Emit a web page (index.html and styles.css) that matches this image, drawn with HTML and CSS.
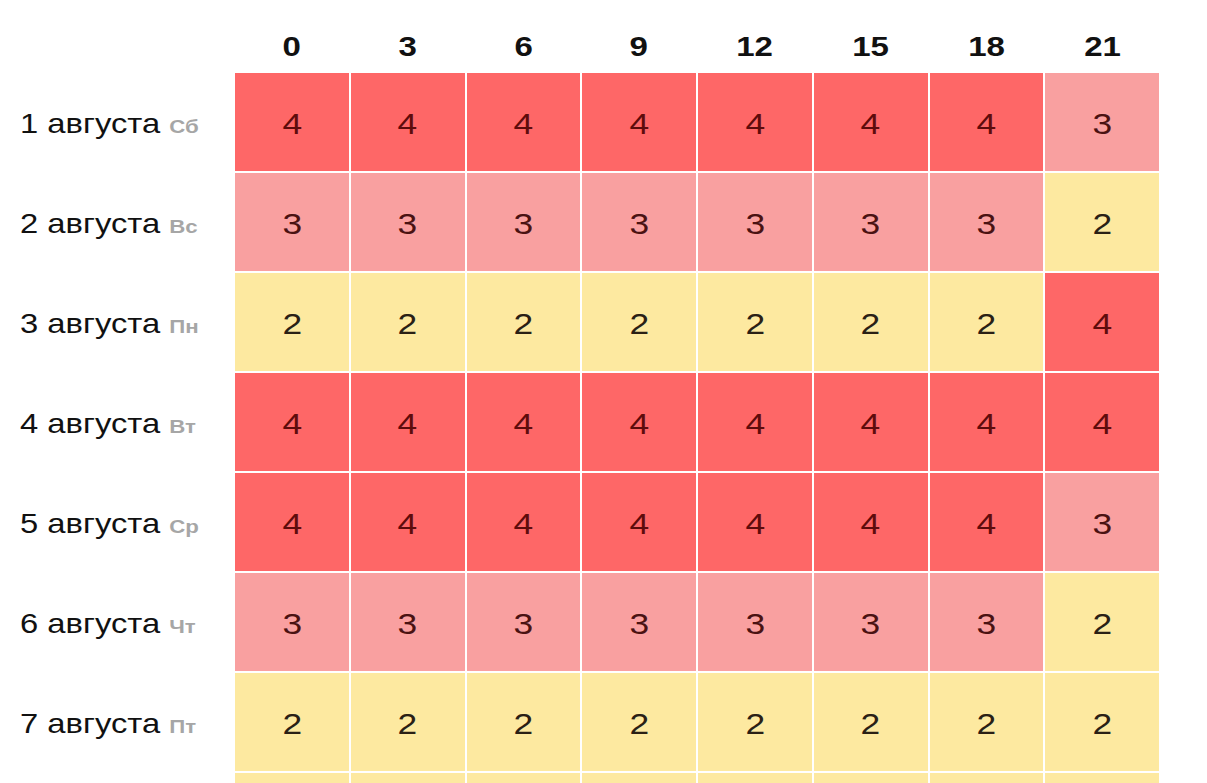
FILE: index.html
```html
<!DOCTYPE html>
<html lang="ru">
<head>
<meta charset="utf-8">
<link rel="stylesheet" href="styles.css">
</head>
<body>
<div class="page">
  <div class="title"><span class="title-text">Магнитные бури, Кр-индекс</span></div>
  <div class="table">
    <div class="corner"></div>
    <div class="hour"><span class="num">0</span></div><div class="hour"><span class="num">3</span></div><div class="hour"><span class="num">6</span></div><div class="hour"><span class="num">9</span></div><div class="hour"><span class="num">12</span></div><div class="hour"><span class="num">15</span></div><div class="hour"><span class="num">18</span></div><div class="hour"><span class="num">21</span></div>

    <div class="day"><span class="lbl">1 августа <span class="wd">Сб</span></span></div>
    <div class="c k4"><span class="num">4</span></div><div class="c k4"><span class="num">4</span></div><div class="c k4"><span class="num">4</span></div><div class="c k4"><span class="num">4</span></div><div class="c k4"><span class="num">4</span></div><div class="c k4"><span class="num">4</span></div><div class="c k4"><span class="num">4</span></div><div class="c k3"><span class="num">3</span></div>

    <div class="day"><span class="lbl">2 августа <span class="wd">Вс</span></span></div>
    <div class="c k3"><span class="num">3</span></div><div class="c k3"><span class="num">3</span></div><div class="c k3"><span class="num">3</span></div><div class="c k3"><span class="num">3</span></div><div class="c k3"><span class="num">3</span></div><div class="c k3"><span class="num">3</span></div><div class="c k3"><span class="num">3</span></div><div class="c k2"><span class="num">2</span></div>

    <div class="day"><span class="lbl">3 августа <span class="wd">Пн</span></span></div>
    <div class="c k2"><span class="num">2</span></div><div class="c k2"><span class="num">2</span></div><div class="c k2"><span class="num">2</span></div><div class="c k2"><span class="num">2</span></div><div class="c k2"><span class="num">2</span></div><div class="c k2"><span class="num">2</span></div><div class="c k2"><span class="num">2</span></div><div class="c k4"><span class="num">4</span></div>

    <div class="day"><span class="lbl">4 августа <span class="wd">Вт</span></span></div>
    <div class="c k4"><span class="num">4</span></div><div class="c k4"><span class="num">4</span></div><div class="c k4"><span class="num">4</span></div><div class="c k4"><span class="num">4</span></div><div class="c k4"><span class="num">4</span></div><div class="c k4"><span class="num">4</span></div><div class="c k4"><span class="num">4</span></div><div class="c k4"><span class="num">4</span></div>

    <div class="day"><span class="lbl">5 августа <span class="wd">Ср</span></span></div>
    <div class="c k4"><span class="num">4</span></div><div class="c k4"><span class="num">4</span></div><div class="c k4"><span class="num">4</span></div><div class="c k4"><span class="num">4</span></div><div class="c k4"><span class="num">4</span></div><div class="c k4"><span class="num">4</span></div><div class="c k4"><span class="num">4</span></div><div class="c k3"><span class="num">3</span></div>

    <div class="day"><span class="lbl">6 августа <span class="wd">Чт</span></span></div>
    <div class="c k3"><span class="num">3</span></div><div class="c k3"><span class="num">3</span></div><div class="c k3"><span class="num">3</span></div><div class="c k3"><span class="num">3</span></div><div class="c k3"><span class="num">3</span></div><div class="c k3"><span class="num">3</span></div><div class="c k3"><span class="num">3</span></div><div class="c k2"><span class="num">2</span></div>

    <div class="day"><span class="lbl">7 августа <span class="wd">Пт</span></span></div>
    <div class="c k2"><span class="num">2</span></div><div class="c k2"><span class="num">2</span></div><div class="c k2"><span class="num">2</span></div><div class="c k2"><span class="num">2</span></div><div class="c k2"><span class="num">2</span></div><div class="c k2"><span class="num">2</span></div><div class="c k2"><span class="num">2</span></div><div class="c k2"><span class="num">2</span></div>

    <div class="day"></div>
    <div class="c k2"></div><div class="c k2"></div><div class="c k2"></div><div class="c k2"></div><div class="c k2"></div><div class="c k2"></div><div class="c k2"></div><div class="c k2"></div>
  </div>
</div>
</body>
</html>
```

FILE: styles.css
```css
html, body {
  margin: 0;
  padding: 0;
  background: #ffffff;
}
body {
  width: 1207px;
  height: 783px;
  overflow: hidden;
  font-family: "Liberation Sans", Arial, sans-serif;
  color: #111111;
}
.page {
  padding-left: 20px;
  height: 783px;
  overflow: hidden;
}
.title {
  height: 4px;
  margin-left: 213px;
  width: 925px;
  display: flex;
  justify-content: center;
  align-items: flex-end;
  overflow: visible;
}
.title-text {
  font-size: 28px;
  line-height: 28px;
  font-weight: bold;
  color: #333;
  opacity: 0.3;
  margin-bottom: 7px;
  transform: scaleX(1.18);
}
.table {
  display: grid;
  grid-template-columns: 213px repeat(8, 113.75px);
  grid-template-rows: 67px repeat(7, 98px) 20px;
  column-gap: 2px;
  row-gap: 2px;
}
.hour {
  font-size: 28px;
  font-weight: bold;
  color: #111;
  display: flex;
  align-items: flex-end;
  justify-content: center;
  padding-bottom: 8px;
}
.num {
  display: inline-block;
  transform: scaleX(1.18);
}
.day {
  display: flex;
  align-items: center;
  padding-top: 4px;
}
.lbl {
  display: inline-block;
  white-space: pre;
  font-size: 28px;
  color: #111;
  transform: scaleX(1.17);
  transform-origin: left center;
}
.wd {
  font-size: 19px;
  font-weight: bold;
  color: #a6a6a6;
}
.c {
  display: flex;
  align-items: center;
  justify-content: center;
  font-size: 30px;
  padding-top: 3px;
}
.k4 {
  background: #fe6767;
  color: #5e0c0c;
}
.k3 {
  background: #f9a0a0;
  color: #4a1212;
}
.k2 {
  background: #fde9a0;
  color: #2a2015;
}
```
